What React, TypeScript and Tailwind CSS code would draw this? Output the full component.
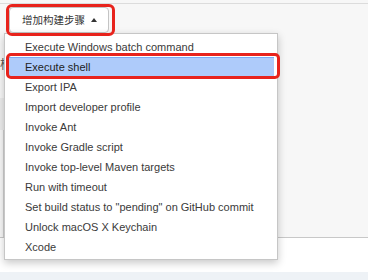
const items = [
  "Execute Windows batch command",
  "Execute shell",
  "Export IPA",
  "Import developer profile",
  "Invoke Ant",
  "Invoke Gradle script",
  "Invoke top-level Maven targets",
  "Run with timeout",
  'Set build status to "pending" on GitHub commit',
  "Unlock macOS X Keychain",
  "Xcode",
];

export default function App() {
  return (
    <div className="relative w-[368px] h-[280px] overflow-hidden bg-white text-[#333] font-['Liberation_Sans',Arial,'Noto_Sans_CJK_SC',sans-serif]">
      <div className="h-[3px] bg-[#f7f7f7]" />
      <div className="h-px bg-[#dcdcdc]" />
      <div className="h-[234px] bg-[#f7f7f7] border-b border-[#c8c8c8] flex flex-col">
        <div className="pt-[3px] pl-[9px]">
          <button className="h-[26px] w-[100px] flex items-center pl-[12px] gap-[6px] bg-white border border-[#c4c4c4] rounded-[4px] text-[10.5px] text-[#333] font-['Noto_Sans_CJK_SC',sans-serif]">
            <span className="whitespace-nowrap">增加构建步骤</span>
            <svg width="6" height="4" viewBox="0 0 6 4" className="mb-[1px] shrink-0">
              <path d="M0 4 L3 0 L6 4 Z" fill="#333" />
            </svg>
          </button>
        </div>
        <div className="mt-[24px] h-[14px] text-[12px] leading-[14px] text-[#555] font-['Noto_Sans_CJK_SC',sans-serif]">构建</div>
        <div className="mt-[27px] h-[32px] w-[20px] bg-[#ececec]" />
        <div className="ml-[3px] w-[20px] flex-1 border-l border-[#cfcfcf]">
          <div className="h-[32px] border-b border-[#d6d6d6]" />
        </div>
      </div>
      <div className="h-[34px] bg-white" />
      <div className="h-[8px] bg-[#eef2f6]" />

      {/* dropdown menu */}
      <div className="absolute left-[4px] top-[33px] w-[274px] h-[227px] bg-white border border-[#c6c6c6] shadow-[0_3px_8px_rgba(0,0,0,0.22)] pt-[3px]">
        {items.map((label, i) => (
          <div
            key={label}
            className={
              i === 1
                ? "h-[20px] mx-[3px] pl-[17px] flex items-center text-[11px] text-[#222] bg-[#aecbfa] shadow-[inset_0_1px_0_#7ea8f2,inset_0_-1px_0_#7ea8f2]"
                : "h-[20px] pl-[20px] flex items-center text-[11px] text-[#3a3a3a]"
            }
          >
            {label}
          </div>
        ))}
      </div>

      {/* red annotation boxes */}
      <div className="absolute left-[6px] top-[4px] w-[109px] h-[32px] border-[3px] border-[#e8231c] rounded-[6px]" />
      <div className="absolute left-[6px] top-[53px] w-[274px] h-[26px] border-[3px] border-[#e8231c] rounded-[5px]" />
    </div>
  );
}
